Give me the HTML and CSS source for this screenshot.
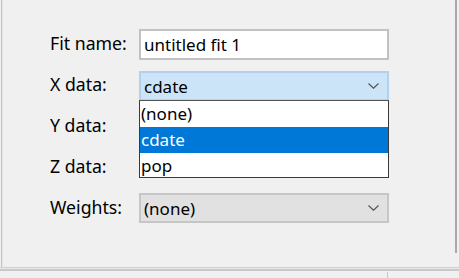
FILE: index.html
```html
<!DOCTYPE html>
<html>
<head>
<meta charset="utf-8">
<link rel="stylesheet" href="styles.css">
</head>
<body>
<div class="window">
  <div class="main">
    <div class="content">
      <div class="form">
        <label class="lbl">Fit name:</label>
        <div class="textbox">untitled fit 1</div>

        <label class="lbl">X data:</label>
        <div class="combo-wrap">
          <div class="combo combo-active">
            <span>cdate</span>
            <svg class="chev" width="11" height="6" viewBox="0 0 11 6"><path d="M0.5 0.5 L5.5 5.2 L10.5 0.5" fill="none" stroke="#5a5a5a" stroke-width="1.3"/></svg>
          </div>
          <ul class="dropdown">
            <li>(none)</li>
            <li class="sel">cdate</li>
            <li>pop</li>
          </ul>
        </div>

        <label class="lbl">Y data:</label>
        <div class="placeholder"></div>

        <label class="lbl">Z data:</label>
        <div class="placeholder"></div>

        <label class="lbl">Weights:</label>
        <div class="combo combo-disabled">
          <span>(none)</span>
          <svg class="chev" width="11" height="6" viewBox="0 0 11 6"><path d="M0.5 0.5 L5.5 5.2 L10.5 0.5" fill="none" stroke="#5a5a5a" stroke-width="1.3"/></svg>
        </div>
      </div>
    </div>
  </div>
  <div class="bottom">
    <div class="bottom-left"></div>
    <div class="bottom-right"></div>
  </div>
</div>
</body>
</html>
```

FILE: styles.css
```css
html, body {
  margin: 0;
  padding: 0;
  background: #f0f0f0;
}
body {
  width: 459px;
  height: 278px;
  overflow: hidden;
  font-family: "Noto Sans", "Open Sans", sans-serif;
  font-size: 17px;
  color: #000;
}
.window {
  display: flex;
  flex-direction: column;
  height: 278px;
}
.main {
  height: 267px;
  margin-left: 1px;
  border-left: 1px solid #c4c4c4;
  box-shadow: inset 1px 0 0 #e6e6e6;
  display: flex;
  align-items: flex-start;
}
.content {
  width: 453px;
  height: 253px;
  border-right: 2px solid #a9a9a9;
}
.form {
  display: grid;
  grid-template-columns: 89px 250px;
  grid-auto-rows: 30px;
  row-gap: 11px;
  padding-top: 29px;
  padding-left: 48px;
}
.lbl {
  display: flex;
  align-items: center;
  line-height: 1;
  font-size: 17.7px;
}
.textbox {
  height: 31px;
  box-sizing: border-box;
  background: #fff;
  border: 2px solid #c2c2c2;
  padding-left: 3px;
  display: flex;
  align-items: center;
  margin-bottom: -1px;
}
.combo-wrap {
  position: relative;
}
.combo {
  height: 30px;
  box-sizing: border-box;
  display: flex;
  align-items: center;
  justify-content: space-between;
  padding: 0 8px 0 3px;
}
.combo-active {
  background: #cce4f7;
  border: 2px solid #b3d1ec;
  margin-top: 1px;
}
.combo-disabled {
  background: #e1e1e1;
  border: 2px solid #c6c6c6;
  padding-left: 3px;
}
.chev {
  display: block;
}
.dropdown {
  position: absolute;
  top: 30px;
  left: 0;
  width: 250px;
  box-sizing: border-box;
  margin: 0;
  padding: 0;
  list-style: none;
  background: #fff;
  border: 1px solid #3a3a3a;
  border-top-color: #555;
  z-index: 2;
}
.dropdown li {
  height: 26px;
  line-height: 26px;
  padding-left: 1px;
}
.dropdown li:first-child {
  height: 26px;
}
.dropdown li:last-child {
  height: 24px;
}
.dropdown li.sel {
  background: #0078d7;
  color: #fff;
}
.placeholder {
  height: 30px;
}
.bottom {
  flex: 1;
  display: flex;
  border-top: 1px solid #d0d0d0;
  box-shadow: inset 0 1px 0 #e8e8e8, inset 0 3px 0 #c9c9c9;
}
.bottom-left {
  width: 387px;
  border-right: 1px solid #c8c8c8;
  margin-top: 4px;
}
.bottom-right {
  flex: 1;
}
```
